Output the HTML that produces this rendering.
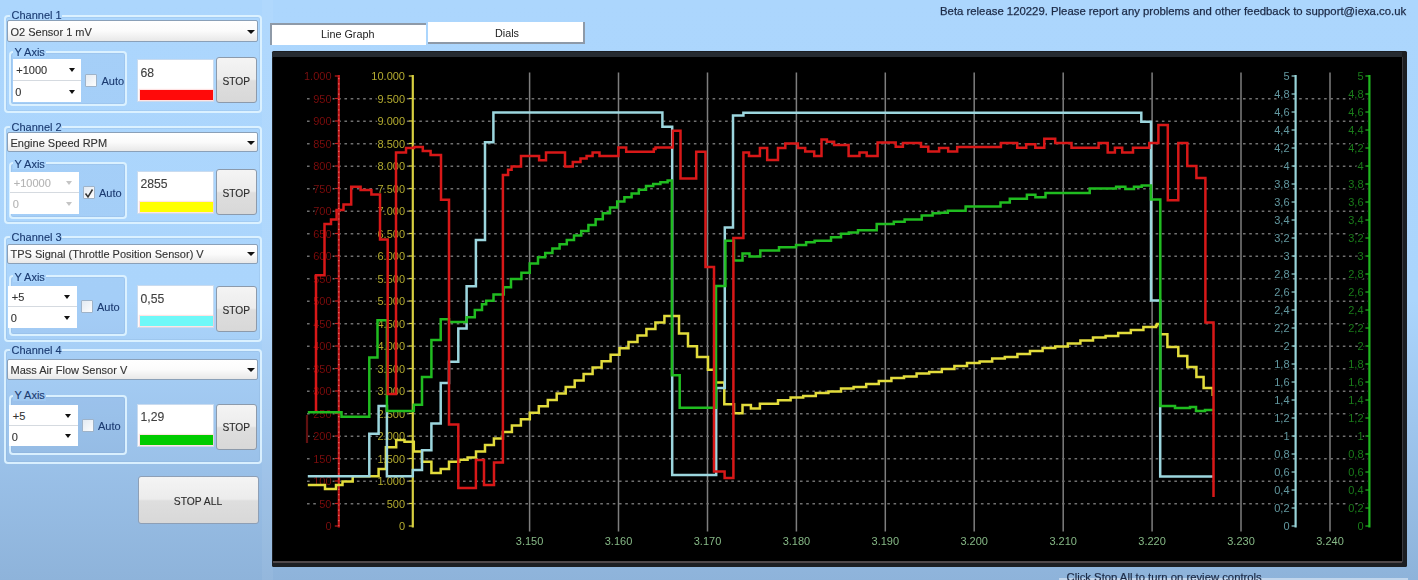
<!DOCTYPE html>
<html><head><meta charset="utf-8"><style>
*{margin:0;padding:0;box-sizing:border-box}
html,body{width:1418px;height:580px;overflow:hidden}
body{position:relative;font-family:"Liberation Sans",sans-serif;font-size:11px;
background:linear-gradient(180deg,#acd6fd 0px,#abd5fc 300px,#9fc6ee 420px,#8eb3da 580px);}
.a{position:absolute}
.t{position:absolute;white-space:pre;line-height:1}
.grp{position:absolute;border:2.4px solid rgba(222,243,255,0.92);border-radius:4px;box-shadow:inset 0 0 0 1px rgba(120,160,200,0.18)}
.grpi{position:absolute;border:1px solid rgba(140,180,215,0.45);border-radius:3px}
.lbg{position:absolute;background:linear-gradient(180deg,#acd6fd 0px,#abd5fc 300px,#9fc6ee 420px,#8eb3da 580px) fixed}
.lbl{position:absolute;white-space:pre;line-height:1;color:#1a3a70;font-size:11px;padding:0 1px}
.combo{position:absolute;border:1px solid #8aa0b8;border-radius:2px;background:linear-gradient(180deg,#ffffff 0%,#fbfbfb 50%,#e8e8e8 100%);color:#333;}
.combo span{position:absolute;left:2px;top:5px;white-space:pre;line-height:1}
.arr{position:absolute;width:0;height:0;border-left:4px solid transparent;border-right:4px solid transparent;border-top:4px solid #111}
.sc{position:absolute;background:#fff;color:#333}
.sc span{position:absolute;white-space:pre;line-height:1}
.chk{position:absolute;width:12px;height:13px;border:1px solid #9fb3c8;background:linear-gradient(135deg,#e3eaf2,#fdfdfd);border-radius:1px}
.val{position:absolute;background:#fff;border:1px solid #c9dbef}
.val span{position:absolute;left:3px;top:6.5px;font-size:12.2px;color:#404040;line-height:1}
.btn{position:absolute;border:1px solid #8c9aab;border-radius:3px;background:linear-gradient(180deg,#f4f4f4 0%,#ececec 48%,#dedede 52%,#d8d8d8 100%);color:#2c2c2c}
.lbl,.combo span,.sc span,.val span,.btn span{-webkit-text-stroke:0.12px currentColor}
.btn span{position:absolute;left:0;right:0;text-align:center;white-space:pre;line-height:1}
</style></head><body><div id="wrap" style="position:absolute;left:0;top:0;width:1418px;height:580px;filter:blur(0.65px)">
<div class="t" style="left:940px;top:6px;font-size:11.35px;color:#1c2a46;-webkit-text-stroke:0.25px currentColor">Beta release 120229. Please report any problems and other feedback to support@iexa.co.uk</div>
<div class="grp" style="left:4px;top:14.5px;width:258px;height:98.0px"></div>
<div class="lbg" style="left:10px;top:7.800000000000001px;width:52px;height:13px"></div>
<div class="lbl" style="left:10.5px;top:9.5px;">Channel 1</div>
<div class="combo" style="left:7px;top:20.4px;width:251px;height:21.3px"><span style="top:5.3500000000000005px;left:2.5px">O2 Sensor 1 mV</span><div class="arr" style="left:239px;top:8.15px"></div></div>
<div class="grp" style="left:8.5px;top:50.7px;width:118px;height:55.3px;background:rgba(0,40,100,0.035)"></div>
<div class="lbg" style="left:13px;top:45px;width:33px;height:12px"></div>
<div class="lbl" style="left:13.5px;top:46.5px;">Y Axis</div>
<div class="sc" style="left:12.8px;top:59px;width:68.5px;height:21.5px;border-bottom:1px solid #d5dae0"><span style="left:3.5px;top:6.25px;color:#333">+1000</span><div class="arr" style="left:56px;top:9.25px;border-top-color:#111;border-left-width:3.5px;border-right-width:3.5px"></div></div>
<div class="sc" style="left:12.8px;top:80.5px;width:68.5px;height:21.5px"><span style="left:2.5px;top:6.75px;color:#333">0</span><div class="arr" style="left:56px;top:9.25px;border-top-color:#111;border-left-width:3.5px;border-right-width:3.5px"></div></div>
<div class="chk" style="left:85.3px;top:74.0px"></div>
<div class="lbl" style="left:100.5px;top:75.5px">Auto</div>
<div class="val" style="left:136.5px;top:59px;width:77.5px;height:43px"><span>68</span><div class="a" style="left:2px;top:30px;width:73px;height:9.8px;background:#ff0a0a;box-shadow:0 0 1px 1px rgba(255,200,200,0.5)"></div></div>
<div class="btn" style="left:215.5px;top:57.4px;width:41.5px;height:46px"><span style="top:18.5px;font-size:10.2px">STOP</span></div>
<div class="grp" style="left:4px;top:126.1px;width:258px;height:98.4px"></div>
<div class="lbg" style="left:10px;top:120.3px;width:52px;height:13px"></div>
<div class="lbl" style="left:10.5px;top:122.0px;">Channel 2</div>
<div class="combo" style="left:7px;top:132.3px;width:251px;height:20px"><span style="top:4.7px;left:2.5px">Engine Speed RPM</span><div class="arr" style="left:239px;top:7.5px"></div></div>
<div class="grp" style="left:8.5px;top:162px;width:118px;height:56.80000000000001px;background:rgba(0,40,100,0.035)"></div>
<div class="lbg" style="left:13px;top:157px;width:33px;height:12px"></div>
<div class="lbl" style="left:13.5px;top:158.5px;">Y Axis</div>
<div class="sc" style="left:10.3px;top:171.5px;width:68.5px;height:21.0px;border-bottom:1px solid #d5dae0"><span style="left:3.5px;top:6.0px;color:#b4b4b4">+10000</span><div class="arr" style="left:56px;top:9.0px;border-top-color:#c4c4c4;border-left-width:3.5px;border-right-width:3.5px"></div></div>
<div class="sc" style="left:10.3px;top:192.5px;width:68.5px;height:21.0px"><span style="left:2.5px;top:6.5px;color:#b4b4b4">0</span><div class="arr" style="left:56px;top:9.0px;border-top-color:#c4c4c4;border-left-width:3.5px;border-right-width:3.5px"></div></div>
<div class="chk" style="left:82.8px;top:186.0px"></div>
<svg class="a" style="left:83.3px;top:186.5px" width="12" height="13"><path d="M2.5 6.5 L5 10 L9.5 2.5" stroke="#333" stroke-width="1.5" fill="none"/></svg>
<div class="lbl" style="left:98.0px;top:187.5px">Auto</div>
<div class="val" style="left:136.5px;top:170.8px;width:77.5px;height:43px"><span>2855</span><div class="a" style="left:2px;top:30px;width:73px;height:9.8px;background:#ffff00;box-shadow:0 0 1px 1px rgba(255,200,200,0.5)"></div></div>
<div class="btn" style="left:215.5px;top:169.3px;width:41.5px;height:46px"><span style="top:18.5px;font-size:10.2px">STOP</span></div>
<div class="grp" style="left:4px;top:235.5px;width:258px;height:106.5px"></div>
<div class="lbg" style="left:10px;top:230px;width:52px;height:13px"></div>
<div class="lbl" style="left:10.5px;top:231.7px;">Channel 3</div>
<div class="combo" style="left:7px;top:244px;width:251px;height:19.5px"><span style="top:4.45px;left:2.5px">TPS Signal (Throttle Position Sensor) V</span><div class="arr" style="left:239px;top:7.25px"></div></div>
<div class="grp" style="left:8.5px;top:275.1px;width:118px;height:60.89999999999998px;background:rgba(0,40,100,0.035)"></div>
<div class="lbg" style="left:13px;top:270px;width:33px;height:12px"></div>
<div class="lbl" style="left:13.5px;top:271.5px;">Y Axis</div>
<div class="sc" style="left:8.3px;top:285.8px;width:68.5px;height:21.0px;border-bottom:1px solid #d5dae0"><span style="left:3.5px;top:6.0px;color:#333">+5</span><div class="arr" style="left:56px;top:9.0px;border-top-color:#111;border-left-width:3.5px;border-right-width:3.5px"></div></div>
<div class="sc" style="left:8.3px;top:306.8px;width:68.5px;height:21.0px"><span style="left:2.5px;top:6.5px;color:#333">0</span><div class="arr" style="left:56px;top:9.0px;border-top-color:#111;border-left-width:3.5px;border-right-width:3.5px"></div></div>
<div class="chk" style="left:80.8px;top:300.3px"></div>
<div class="lbl" style="left:96.0px;top:301.8px">Auto</div>
<div class="val" style="left:136.5px;top:285px;width:77.5px;height:43px"><span>0,55</span><div class="a" style="left:2px;top:30px;width:73px;height:9.8px;background:#6ff8f8;box-shadow:0 0 1px 1px rgba(255,200,200,0.5)"></div></div>
<div class="btn" style="left:215.5px;top:286px;width:41.5px;height:46px"><span style="top:18.5px;font-size:10.2px">STOP</span></div>
<div class="grp" style="left:4px;top:348.5px;width:258px;height:115.0px"></div>
<div class="lbg" style="left:10px;top:343.3px;width:52px;height:13px"></div>
<div class="lbl" style="left:10.5px;top:345.0px;">Channel 4</div>
<div class="combo" style="left:7px;top:359px;width:251px;height:20.8px"><span style="top:5.1000000000000005px;left:2.5px">Mass Air Flow Sensor V</span><div class="arr" style="left:239px;top:7.9px"></div></div>
<div class="grp" style="left:8.5px;top:394.5px;width:118px;height:60.0px;background:rgba(0,40,100,0.035)"></div>
<div class="lbg" style="left:13px;top:388.5px;width:33px;height:12px"></div>
<div class="lbl" style="left:13.5px;top:390.0px;">Y Axis</div>
<div class="sc" style="left:9.3px;top:405px;width:68.5px;height:20.65px;border-bottom:1px solid #d5dae0"><span style="left:3.5px;top:5.824999999999999px;color:#333">+5</span><div class="arr" style="left:56px;top:8.825px;border-top-color:#111;border-left-width:3.5px;border-right-width:3.5px"></div></div>
<div class="sc" style="left:9.3px;top:425.65px;width:68.5px;height:20.65px"><span style="left:2.5px;top:6.324999999999999px;color:#333">0</span><div class="arr" style="left:56px;top:8.825px;border-top-color:#111;border-left-width:3.5px;border-right-width:3.5px"></div></div>
<div class="chk" style="left:81.8px;top:419.15px"></div>
<div class="lbl" style="left:97.0px;top:420.65px">Auto</div>
<div class="val" style="left:136.5px;top:403.8px;width:77.5px;height:43px"><span>1,29</span><div class="a" style="left:2px;top:30px;width:73px;height:9.8px;background:#00cc00;box-shadow:0 0 1px 1px rgba(255,200,200,0.5)"></div></div>
<div class="btn" style="left:215.5px;top:403.8px;width:41.5px;height:46px"><span style="top:18.5px;font-size:10.2px">STOP</span></div>
<div class="btn" style="left:137.5px;top:475.5px;width:121px;height:48.5px;border-color:#8e9fb5"><span style="top:20px;font-size:10.3px">STOP ALL</span></div>
<div class="a" style="left:262px;top:0;width:11px;height:580px;background:rgba(255,255,255,0.06)"></div>
<div class="a" style="left:270px;top:23px;width:156px;height:22px;background:#fff;border-top:2px solid #8e9aa8;border-left:2px solid #8e9aa8"></div>
<div class="t" style="left:321px;top:29px;font-size:10.8px;color:#222">Line Graph</div>
<div class="a" style="left:428px;top:22px;width:157px;height:22px;background:#fff;border-right:2px solid #8e9aa8;border-bottom:2px solid #8e9aa8"></div>
<div class="t" style="left:495px;top:28px;font-size:10.8px;color:#222">Dials</div>
<div class="a" style="left:272px;top:51px;width:1135px;height:515.5px;background:#1c1e22;border-radius:1.5px"></div>
<div class="a" style="left:272px;top:51.5px;width:1130px;height:6px;background:#262b31"></div>
<div class="a" style="left:273px;top:561px;width:1129px;height:1.6px;background:#50484a"></div>
<div class="a" style="left:1401.5px;top:57px;width:1.5px;height:505px;background:#3a3a40"></div>
<div class="a" style="left:273px;top:57px;width:1128.5px;height:504px;background:#000"></div>
<svg class="a" style="left:0;top:0;font-family:'Liberation Sans',sans-serif" width="1418" height="580" viewBox="0 0 1418 580"><line x1="529.6" y1="72.5" x2="529.6" y2="531.5" stroke="#7e7e7e" stroke-width="1.5"/><line x1="618.5" y1="72.5" x2="618.5" y2="531.5" stroke="#7e7e7e" stroke-width="1.5"/><line x1="707.5" y1="72.5" x2="707.5" y2="531.5" stroke="#7e7e7e" stroke-width="1.5"/><line x1="796.4" y1="72.5" x2="796.4" y2="531.5" stroke="#7e7e7e" stroke-width="1.5"/><line x1="885.3" y1="72.5" x2="885.3" y2="531.5" stroke="#7e7e7e" stroke-width="1.5"/><line x1="974.2" y1="72.5" x2="974.2" y2="531.5" stroke="#7e7e7e" stroke-width="1.5"/><line x1="1063.2" y1="72.5" x2="1063.2" y2="531.5" stroke="#7e7e7e" stroke-width="1.5"/><line x1="1152.1" y1="72.5" x2="1152.1" y2="531.5" stroke="#7e7e7e" stroke-width="1.5"/><line x1="1241.0" y1="72.5" x2="1241.0" y2="531.5" stroke="#7e7e7e" stroke-width="1.5"/><line x1="1330.0" y1="72.5" x2="1330.0" y2="531.5" stroke="#7e7e7e" stroke-width="1.5"/><line x1="307" y1="98.7" x2="1368" y2="98.7" stroke="#707070" stroke-width="1.5" stroke-dasharray="2.6 3.64"/><line x1="307" y1="121.2" x2="1368" y2="121.2" stroke="#707070" stroke-width="1.5" stroke-dasharray="2.6 3.64"/><line x1="307" y1="143.7" x2="1368" y2="143.7" stroke="#707070" stroke-width="1.5" stroke-dasharray="2.6 3.64"/><line x1="307" y1="166.2" x2="1368" y2="166.2" stroke="#707070" stroke-width="1.5" stroke-dasharray="2.6 3.64"/><line x1="307" y1="188.7" x2="1368" y2="188.7" stroke="#707070" stroke-width="1.5" stroke-dasharray="2.6 3.64"/><line x1="307" y1="211.2" x2="1368" y2="211.2" stroke="#707070" stroke-width="1.5" stroke-dasharray="2.6 3.64"/><line x1="307" y1="233.7" x2="1368" y2="233.7" stroke="#707070" stroke-width="1.5" stroke-dasharray="2.6 3.64"/><line x1="307" y1="256.2" x2="1368" y2="256.2" stroke="#707070" stroke-width="1.5" stroke-dasharray="2.6 3.64"/><line x1="307" y1="278.7" x2="1368" y2="278.7" stroke="#707070" stroke-width="1.5" stroke-dasharray="2.6 3.64"/><line x1="307" y1="301.2" x2="1368" y2="301.2" stroke="#707070" stroke-width="1.5" stroke-dasharray="2.6 3.64"/><line x1="307" y1="323.7" x2="1368" y2="323.7" stroke="#707070" stroke-width="1.5" stroke-dasharray="2.6 3.64"/><line x1="307" y1="346.2" x2="1368" y2="346.2" stroke="#707070" stroke-width="1.5" stroke-dasharray="2.6 3.64"/><line x1="307" y1="368.7" x2="1368" y2="368.7" stroke="#707070" stroke-width="1.5" stroke-dasharray="2.6 3.64"/><line x1="307" y1="391.2" x2="1368" y2="391.2" stroke="#707070" stroke-width="1.5" stroke-dasharray="2.6 3.64"/><line x1="307" y1="413.7" x2="1368" y2="413.7" stroke="#707070" stroke-width="1.5" stroke-dasharray="2.6 3.64"/><line x1="307" y1="436.2" x2="1368" y2="436.2" stroke="#707070" stroke-width="1.5" stroke-dasharray="2.6 3.64"/><line x1="307" y1="458.7" x2="1368" y2="458.7" stroke="#707070" stroke-width="1.5" stroke-dasharray="2.6 3.64"/><line x1="307" y1="481.2" x2="1368" y2="481.2" stroke="#707070" stroke-width="1.5" stroke-dasharray="2.6 3.64"/><line x1="307" y1="503.7" x2="1368" y2="503.7" stroke="#707070" stroke-width="1.5" stroke-dasharray="2.6 3.64"/><text x="529.6" y="544.5" text-anchor="middle" font-size="11" fill="#86b886">3.150</text><text x="618.5" y="544.5" text-anchor="middle" font-size="11" fill="#86b886">3.160</text><text x="707.5" y="544.5" text-anchor="middle" font-size="11" fill="#86b886">3.170</text><text x="796.4" y="544.5" text-anchor="middle" font-size="11" fill="#86b886">3.180</text><text x="885.3" y="544.5" text-anchor="middle" font-size="11" fill="#86b886">3.190</text><text x="974.2" y="544.5" text-anchor="middle" font-size="11" fill="#86b886">3.200</text><text x="1063.2" y="544.5" text-anchor="middle" font-size="11" fill="#86b886">3.210</text><text x="1152.1" y="544.5" text-anchor="middle" font-size="11" fill="#86b886">3.220</text><text x="1241.0" y="544.5" text-anchor="middle" font-size="11" fill="#86b886">3.230</text><text x="1330.0" y="544.5" text-anchor="middle" font-size="11" fill="#86b886">3.240</text><defs><filter id="bl" x="-20%" y="-50%" width="140%" height="200%"><feGaussianBlur stdDeviation="0.55"/></filter></defs><line x1="338.8" y1="75" x2="338.8" y2="527.5" stroke="#c41c1c" stroke-width="2.2"/><line x1="334.8" y1="76.0" x2="338.8" y2="76.0" stroke="#c41c1c" stroke-width="1.2"/><text x="331.5" y="80.0" text-anchor="end" font-size="11" fill="#7a0a0a" stroke="#000" stroke-width="3" paint-order="stroke" filter="url(#bl)">1.000</text><line x1="334.8" y1="98.5" x2="338.8" y2="98.5" stroke="#c41c1c" stroke-width="1.2"/><text x="331.5" y="102.5" text-anchor="end" font-size="11" fill="#7a0a0a" stroke="#000" stroke-width="3" paint-order="stroke" filter="url(#bl)">950</text><line x1="334.8" y1="121.0" x2="338.8" y2="121.0" stroke="#c41c1c" stroke-width="1.2"/><text x="331.5" y="125.0" text-anchor="end" font-size="11" fill="#7a0a0a" stroke="#000" stroke-width="3" paint-order="stroke" filter="url(#bl)">900</text><line x1="334.8" y1="143.5" x2="338.8" y2="143.5" stroke="#c41c1c" stroke-width="1.2"/><text x="331.5" y="147.5" text-anchor="end" font-size="11" fill="#7a0a0a" stroke="#000" stroke-width="3" paint-order="stroke" filter="url(#bl)">850</text><line x1="334.8" y1="166.0" x2="338.8" y2="166.0" stroke="#c41c1c" stroke-width="1.2"/><text x="331.5" y="170.0" text-anchor="end" font-size="11" fill="#7a0a0a" stroke="#000" stroke-width="3" paint-order="stroke" filter="url(#bl)">800</text><line x1="334.8" y1="188.5" x2="338.8" y2="188.5" stroke="#c41c1c" stroke-width="1.2"/><text x="331.5" y="192.5" text-anchor="end" font-size="11" fill="#7a0a0a" stroke="#000" stroke-width="3" paint-order="stroke" filter="url(#bl)">750</text><line x1="334.8" y1="211.0" x2="338.8" y2="211.0" stroke="#c41c1c" stroke-width="1.2"/><text x="331.5" y="215.0" text-anchor="end" font-size="11" fill="#7a0a0a" stroke="#000" stroke-width="3" paint-order="stroke" filter="url(#bl)">700</text><line x1="334.8" y1="233.5" x2="338.8" y2="233.5" stroke="#c41c1c" stroke-width="1.2"/><text x="331.5" y="237.5" text-anchor="end" font-size="11" fill="#7a0a0a" stroke="#000" stroke-width="3" paint-order="stroke" filter="url(#bl)">650</text><line x1="334.8" y1="256.0" x2="338.8" y2="256.0" stroke="#c41c1c" stroke-width="1.2"/><text x="331.5" y="260.0" text-anchor="end" font-size="11" fill="#7a0a0a" stroke="#000" stroke-width="3" paint-order="stroke" filter="url(#bl)">600</text><line x1="334.8" y1="278.5" x2="338.8" y2="278.5" stroke="#c41c1c" stroke-width="1.2"/><text x="331.5" y="282.5" text-anchor="end" font-size="11" fill="#7a0a0a" stroke="#000" stroke-width="3" paint-order="stroke" filter="url(#bl)">550</text><line x1="334.8" y1="301.0" x2="338.8" y2="301.0" stroke="#c41c1c" stroke-width="1.2"/><text x="331.5" y="305.0" text-anchor="end" font-size="11" fill="#7a0a0a" stroke="#000" stroke-width="3" paint-order="stroke" filter="url(#bl)">500</text><line x1="334.8" y1="323.5" x2="338.8" y2="323.5" stroke="#c41c1c" stroke-width="1.2"/><text x="331.5" y="327.5" text-anchor="end" font-size="11" fill="#7a0a0a" stroke="#000" stroke-width="3" paint-order="stroke" filter="url(#bl)">450</text><line x1="334.8" y1="346.0" x2="338.8" y2="346.0" stroke="#c41c1c" stroke-width="1.2"/><text x="331.5" y="350.0" text-anchor="end" font-size="11" fill="#7a0a0a" stroke="#000" stroke-width="3" paint-order="stroke" filter="url(#bl)">400</text><line x1="334.8" y1="368.5" x2="338.8" y2="368.5" stroke="#c41c1c" stroke-width="1.2"/><text x="331.5" y="372.5" text-anchor="end" font-size="11" fill="#7a0a0a" stroke="#000" stroke-width="3" paint-order="stroke" filter="url(#bl)">350</text><line x1="334.8" y1="391.0" x2="338.8" y2="391.0" stroke="#c41c1c" stroke-width="1.2"/><text x="331.5" y="395.0" text-anchor="end" font-size="11" fill="#7a0a0a" stroke="#000" stroke-width="3" paint-order="stroke" filter="url(#bl)">300</text><line x1="334.8" y1="413.5" x2="338.8" y2="413.5" stroke="#c41c1c" stroke-width="1.2"/><text x="331.5" y="417.5" text-anchor="end" font-size="11" fill="#7a0a0a" stroke="#000" stroke-width="3" paint-order="stroke" filter="url(#bl)">250</text><line x1="334.8" y1="436.0" x2="338.8" y2="436.0" stroke="#c41c1c" stroke-width="1.2"/><text x="331.5" y="440.0" text-anchor="end" font-size="11" fill="#7a0a0a" stroke="#000" stroke-width="3" paint-order="stroke" filter="url(#bl)">200</text><line x1="334.8" y1="458.5" x2="338.8" y2="458.5" stroke="#c41c1c" stroke-width="1.2"/><text x="331.5" y="462.5" text-anchor="end" font-size="11" fill="#7a0a0a" stroke="#000" stroke-width="3" paint-order="stroke" filter="url(#bl)">150</text><line x1="334.8" y1="481.0" x2="338.8" y2="481.0" stroke="#c41c1c" stroke-width="1.2"/><text x="331.5" y="485.0" text-anchor="end" font-size="11" fill="#7a0a0a" stroke="#000" stroke-width="3" paint-order="stroke" filter="url(#bl)">100</text><line x1="334.8" y1="503.5" x2="338.8" y2="503.5" stroke="#c41c1c" stroke-width="1.2"/><text x="331.5" y="507.5" text-anchor="end" font-size="11" fill="#7a0a0a" stroke="#000" stroke-width="3" paint-order="stroke" filter="url(#bl)">50</text><line x1="334.8" y1="526.0" x2="338.8" y2="526.0" stroke="#c41c1c" stroke-width="1.2"/><text x="331.5" y="530.0" text-anchor="end" font-size="11" fill="#7a0a0a" stroke="#000" stroke-width="3" paint-order="stroke" filter="url(#bl)">0</text><line x1="338.8" y1="78" x2="338.8" y2="526" stroke="#f07070" stroke-width="1.2" stroke-dasharray="1.2 4"/><line x1="412.8" y1="75" x2="412.8" y2="527.5" stroke="#d8d040" stroke-width="2.2"/><line x1="408.8" y1="76.0" x2="412.8" y2="76.0" stroke="#d8d040" stroke-width="1.2"/><text x="405" y="80.0" text-anchor="end" font-size="11" fill="#b4ac30" stroke="#000" stroke-width="3" paint-order="stroke" >10.000</text><line x1="408.8" y1="98.5" x2="412.8" y2="98.5" stroke="#d8d040" stroke-width="1.2"/><text x="405" y="102.5" text-anchor="end" font-size="11" fill="#b4ac30" stroke="#000" stroke-width="3" paint-order="stroke" >9.500</text><line x1="408.8" y1="121.0" x2="412.8" y2="121.0" stroke="#d8d040" stroke-width="1.2"/><text x="405" y="125.0" text-anchor="end" font-size="11" fill="#b4ac30" stroke="#000" stroke-width="3" paint-order="stroke" >9.000</text><line x1="408.8" y1="143.5" x2="412.8" y2="143.5" stroke="#d8d040" stroke-width="1.2"/><text x="405" y="147.5" text-anchor="end" font-size="11" fill="#b4ac30" stroke="#000" stroke-width="3" paint-order="stroke" >8.500</text><line x1="408.8" y1="166.0" x2="412.8" y2="166.0" stroke="#d8d040" stroke-width="1.2"/><text x="405" y="170.0" text-anchor="end" font-size="11" fill="#b4ac30" stroke="#000" stroke-width="3" paint-order="stroke" >8.000</text><line x1="408.8" y1="188.5" x2="412.8" y2="188.5" stroke="#d8d040" stroke-width="1.2"/><text x="405" y="192.5" text-anchor="end" font-size="11" fill="#b4ac30" stroke="#000" stroke-width="3" paint-order="stroke" >7.500</text><line x1="408.8" y1="211.0" x2="412.8" y2="211.0" stroke="#d8d040" stroke-width="1.2"/><text x="405" y="215.0" text-anchor="end" font-size="11" fill="#b4ac30" stroke="#000" stroke-width="3" paint-order="stroke" >7.000</text><line x1="408.8" y1="233.5" x2="412.8" y2="233.5" stroke="#d8d040" stroke-width="1.2"/><text x="405" y="237.5" text-anchor="end" font-size="11" fill="#b4ac30" stroke="#000" stroke-width="3" paint-order="stroke" >6.500</text><line x1="408.8" y1="256.0" x2="412.8" y2="256.0" stroke="#d8d040" stroke-width="1.2"/><text x="405" y="260.0" text-anchor="end" font-size="11" fill="#b4ac30" stroke="#000" stroke-width="3" paint-order="stroke" >6.000</text><line x1="408.8" y1="278.5" x2="412.8" y2="278.5" stroke="#d8d040" stroke-width="1.2"/><text x="405" y="282.5" text-anchor="end" font-size="11" fill="#b4ac30" stroke="#000" stroke-width="3" paint-order="stroke" >5.500</text><line x1="408.8" y1="301.0" x2="412.8" y2="301.0" stroke="#d8d040" stroke-width="1.2"/><text x="405" y="305.0" text-anchor="end" font-size="11" fill="#b4ac30" stroke="#000" stroke-width="3" paint-order="stroke" >5.000</text><line x1="408.8" y1="323.5" x2="412.8" y2="323.5" stroke="#d8d040" stroke-width="1.2"/><text x="405" y="327.5" text-anchor="end" font-size="11" fill="#b4ac30" stroke="#000" stroke-width="3" paint-order="stroke" >4.500</text><line x1="408.8" y1="346.0" x2="412.8" y2="346.0" stroke="#d8d040" stroke-width="1.2"/><text x="405" y="350.0" text-anchor="end" font-size="11" fill="#b4ac30" stroke="#000" stroke-width="3" paint-order="stroke" >4.000</text><line x1="408.8" y1="368.5" x2="412.8" y2="368.5" stroke="#d8d040" stroke-width="1.2"/><text x="405" y="372.5" text-anchor="end" font-size="11" fill="#b4ac30" stroke="#000" stroke-width="3" paint-order="stroke" >3.500</text><line x1="408.8" y1="391.0" x2="412.8" y2="391.0" stroke="#d8d040" stroke-width="1.2"/><text x="405" y="395.0" text-anchor="end" font-size="11" fill="#b4ac30" stroke="#000" stroke-width="3" paint-order="stroke" >3.000</text><line x1="408.8" y1="413.5" x2="412.8" y2="413.5" stroke="#d8d040" stroke-width="1.2"/><text x="405" y="417.5" text-anchor="end" font-size="11" fill="#b4ac30" stroke="#000" stroke-width="3" paint-order="stroke" >2.500</text><line x1="408.8" y1="436.0" x2="412.8" y2="436.0" stroke="#d8d040" stroke-width="1.2"/><text x="405" y="440.0" text-anchor="end" font-size="11" fill="#b4ac30" stroke="#000" stroke-width="3" paint-order="stroke" >2.000</text><line x1="408.8" y1="458.5" x2="412.8" y2="458.5" stroke="#d8d040" stroke-width="1.2"/><text x="405" y="462.5" text-anchor="end" font-size="11" fill="#b4ac30" stroke="#000" stroke-width="3" paint-order="stroke" >1.500</text><line x1="408.8" y1="481.0" x2="412.8" y2="481.0" stroke="#d8d040" stroke-width="1.2"/><text x="405" y="485.0" text-anchor="end" font-size="11" fill="#b4ac30" stroke="#000" stroke-width="3" paint-order="stroke" >1.000</text><line x1="408.8" y1="503.5" x2="412.8" y2="503.5" stroke="#d8d040" stroke-width="1.2"/><text x="405" y="507.5" text-anchor="end" font-size="11" fill="#b4ac30" stroke="#000" stroke-width="3" paint-order="stroke" >500</text><line x1="408.8" y1="526.0" x2="412.8" y2="526.0" stroke="#d8d040" stroke-width="1.2"/><text x="405" y="530.0" text-anchor="end" font-size="11" fill="#b4ac30" stroke="#000" stroke-width="3" paint-order="stroke" >0</text><line x1="1295.6" y1="75" x2="1295.6" y2="527.5" stroke="#98d4d8" stroke-width="2.2"/><line x1="1291.6" y1="76.0" x2="1295.6" y2="76.0" stroke="#98d4d8" stroke-width="1.2"/><text x="1289.5" y="80.0" text-anchor="end" font-size="11" fill="#6298a0" stroke="#000" stroke-width="3" paint-order="stroke" >5</text><line x1="1291.6" y1="94.0" x2="1295.6" y2="94.0" stroke="#98d4d8" stroke-width="1.2"/><text x="1289.5" y="98.0" text-anchor="end" font-size="11" fill="#6298a0" stroke="#000" stroke-width="3" paint-order="stroke" >4,8</text><line x1="1291.6" y1="112.0" x2="1295.6" y2="112.0" stroke="#98d4d8" stroke-width="1.2"/><text x="1289.5" y="116.0" text-anchor="end" font-size="11" fill="#6298a0" stroke="#000" stroke-width="3" paint-order="stroke" >4,6</text><line x1="1291.6" y1="130.0" x2="1295.6" y2="130.0" stroke="#98d4d8" stroke-width="1.2"/><text x="1289.5" y="134.0" text-anchor="end" font-size="11" fill="#6298a0" stroke="#000" stroke-width="3" paint-order="stroke" >4,4</text><line x1="1291.6" y1="148.0" x2="1295.6" y2="148.0" stroke="#98d4d8" stroke-width="1.2"/><text x="1289.5" y="152.0" text-anchor="end" font-size="11" fill="#6298a0" stroke="#000" stroke-width="3" paint-order="stroke" >4,2</text><line x1="1291.6" y1="166.0" x2="1295.6" y2="166.0" stroke="#98d4d8" stroke-width="1.2"/><text x="1289.5" y="170.0" text-anchor="end" font-size="11" fill="#6298a0" stroke="#000" stroke-width="3" paint-order="stroke" >4</text><line x1="1291.6" y1="184.0" x2="1295.6" y2="184.0" stroke="#98d4d8" stroke-width="1.2"/><text x="1289.5" y="188.0" text-anchor="end" font-size="11" fill="#6298a0" stroke="#000" stroke-width="3" paint-order="stroke" >3,8</text><line x1="1291.6" y1="202.0" x2="1295.6" y2="202.0" stroke="#98d4d8" stroke-width="1.2"/><text x="1289.5" y="206.0" text-anchor="end" font-size="11" fill="#6298a0" stroke="#000" stroke-width="3" paint-order="stroke" >3,6</text><line x1="1291.6" y1="220.0" x2="1295.6" y2="220.0" stroke="#98d4d8" stroke-width="1.2"/><text x="1289.5" y="224.0" text-anchor="end" font-size="11" fill="#6298a0" stroke="#000" stroke-width="3" paint-order="stroke" >3,4</text><line x1="1291.6" y1="238.0" x2="1295.6" y2="238.0" stroke="#98d4d8" stroke-width="1.2"/><text x="1289.5" y="242.0" text-anchor="end" font-size="11" fill="#6298a0" stroke="#000" stroke-width="3" paint-order="stroke" >3,2</text><line x1="1291.6" y1="256.0" x2="1295.6" y2="256.0" stroke="#98d4d8" stroke-width="1.2"/><text x="1289.5" y="260.0" text-anchor="end" font-size="11" fill="#6298a0" stroke="#000" stroke-width="3" paint-order="stroke" >3</text><line x1="1291.6" y1="274.0" x2="1295.6" y2="274.0" stroke="#98d4d8" stroke-width="1.2"/><text x="1289.5" y="278.0" text-anchor="end" font-size="11" fill="#6298a0" stroke="#000" stroke-width="3" paint-order="stroke" >2,8</text><line x1="1291.6" y1="292.0" x2="1295.6" y2="292.0" stroke="#98d4d8" stroke-width="1.2"/><text x="1289.5" y="296.0" text-anchor="end" font-size="11" fill="#6298a0" stroke="#000" stroke-width="3" paint-order="stroke" >2,6</text><line x1="1291.6" y1="310.0" x2="1295.6" y2="310.0" stroke="#98d4d8" stroke-width="1.2"/><text x="1289.5" y="314.0" text-anchor="end" font-size="11" fill="#6298a0" stroke="#000" stroke-width="3" paint-order="stroke" >2,4</text><line x1="1291.6" y1="328.0" x2="1295.6" y2="328.0" stroke="#98d4d8" stroke-width="1.2"/><text x="1289.5" y="332.0" text-anchor="end" font-size="11" fill="#6298a0" stroke="#000" stroke-width="3" paint-order="stroke" >2,2</text><line x1="1291.6" y1="346.0" x2="1295.6" y2="346.0" stroke="#98d4d8" stroke-width="1.2"/><text x="1289.5" y="350.0" text-anchor="end" font-size="11" fill="#6298a0" stroke="#000" stroke-width="3" paint-order="stroke" >2</text><line x1="1291.6" y1="364.0" x2="1295.6" y2="364.0" stroke="#98d4d8" stroke-width="1.2"/><text x="1289.5" y="368.0" text-anchor="end" font-size="11" fill="#6298a0" stroke="#000" stroke-width="3" paint-order="stroke" >1,8</text><line x1="1291.6" y1="382.0" x2="1295.6" y2="382.0" stroke="#98d4d8" stroke-width="1.2"/><text x="1289.5" y="386.0" text-anchor="end" font-size="11" fill="#6298a0" stroke="#000" stroke-width="3" paint-order="stroke" >1,6</text><line x1="1291.6" y1="400.0" x2="1295.6" y2="400.0" stroke="#98d4d8" stroke-width="1.2"/><text x="1289.5" y="404.0" text-anchor="end" font-size="11" fill="#6298a0" stroke="#000" stroke-width="3" paint-order="stroke" >1,4</text><line x1="1291.6" y1="418.0" x2="1295.6" y2="418.0" stroke="#98d4d8" stroke-width="1.2"/><text x="1289.5" y="422.0" text-anchor="end" font-size="11" fill="#6298a0" stroke="#000" stroke-width="3" paint-order="stroke" >1,2</text><line x1="1291.6" y1="436.0" x2="1295.6" y2="436.0" stroke="#98d4d8" stroke-width="1.2"/><text x="1289.5" y="440.0" text-anchor="end" font-size="11" fill="#6298a0" stroke="#000" stroke-width="3" paint-order="stroke" >1</text><line x1="1291.6" y1="454.0" x2="1295.6" y2="454.0" stroke="#98d4d8" stroke-width="1.2"/><text x="1289.5" y="458.0" text-anchor="end" font-size="11" fill="#6298a0" stroke="#000" stroke-width="3" paint-order="stroke" >0,8</text><line x1="1291.6" y1="472.0" x2="1295.6" y2="472.0" stroke="#98d4d8" stroke-width="1.2"/><text x="1289.5" y="476.0" text-anchor="end" font-size="11" fill="#6298a0" stroke="#000" stroke-width="3" paint-order="stroke" >0,6</text><line x1="1291.6" y1="490.0" x2="1295.6" y2="490.0" stroke="#98d4d8" stroke-width="1.2"/><text x="1289.5" y="494.0" text-anchor="end" font-size="11" fill="#6298a0" stroke="#000" stroke-width="3" paint-order="stroke" >0,4</text><line x1="1291.6" y1="508.0" x2="1295.6" y2="508.0" stroke="#98d4d8" stroke-width="1.2"/><text x="1289.5" y="512.0" text-anchor="end" font-size="11" fill="#6298a0" stroke="#000" stroke-width="3" paint-order="stroke" >0,2</text><line x1="1291.6" y1="526.0" x2="1295.6" y2="526.0" stroke="#98d4d8" stroke-width="1.2"/><text x="1289.5" y="530.0" text-anchor="end" font-size="11" fill="#6298a0" stroke="#000" stroke-width="3" paint-order="stroke" >0</text><line x1="1369.4" y1="75" x2="1369.4" y2="527.5" stroke="#20b820" stroke-width="2.2"/><line x1="1365.4" y1="76.0" x2="1369.4" y2="76.0" stroke="#20b820" stroke-width="1.2"/><text x="1363.5" y="80.0" text-anchor="end" font-size="11" fill="#1a7c1a" stroke="#000" stroke-width="3" paint-order="stroke" >5</text><line x1="1365.4" y1="94.0" x2="1369.4" y2="94.0" stroke="#20b820" stroke-width="1.2"/><text x="1363.5" y="98.0" text-anchor="end" font-size="11" fill="#1a7c1a" stroke="#000" stroke-width="3" paint-order="stroke" >4,8</text><line x1="1365.4" y1="112.0" x2="1369.4" y2="112.0" stroke="#20b820" stroke-width="1.2"/><text x="1363.5" y="116.0" text-anchor="end" font-size="11" fill="#1a7c1a" stroke="#000" stroke-width="3" paint-order="stroke" >4,6</text><line x1="1365.4" y1="130.0" x2="1369.4" y2="130.0" stroke="#20b820" stroke-width="1.2"/><text x="1363.5" y="134.0" text-anchor="end" font-size="11" fill="#1a7c1a" stroke="#000" stroke-width="3" paint-order="stroke" >4,4</text><line x1="1365.4" y1="148.0" x2="1369.4" y2="148.0" stroke="#20b820" stroke-width="1.2"/><text x="1363.5" y="152.0" text-anchor="end" font-size="11" fill="#1a7c1a" stroke="#000" stroke-width="3" paint-order="stroke" >4,2</text><line x1="1365.4" y1="166.0" x2="1369.4" y2="166.0" stroke="#20b820" stroke-width="1.2"/><text x="1363.5" y="170.0" text-anchor="end" font-size="11" fill="#1a7c1a" stroke="#000" stroke-width="3" paint-order="stroke" >4</text><line x1="1365.4" y1="184.0" x2="1369.4" y2="184.0" stroke="#20b820" stroke-width="1.2"/><text x="1363.5" y="188.0" text-anchor="end" font-size="11" fill="#1a7c1a" stroke="#000" stroke-width="3" paint-order="stroke" >3,8</text><line x1="1365.4" y1="202.0" x2="1369.4" y2="202.0" stroke="#20b820" stroke-width="1.2"/><text x="1363.5" y="206.0" text-anchor="end" font-size="11" fill="#1a7c1a" stroke="#000" stroke-width="3" paint-order="stroke" >3,6</text><line x1="1365.4" y1="220.0" x2="1369.4" y2="220.0" stroke="#20b820" stroke-width="1.2"/><text x="1363.5" y="224.0" text-anchor="end" font-size="11" fill="#1a7c1a" stroke="#000" stroke-width="3" paint-order="stroke" >3,4</text><line x1="1365.4" y1="238.0" x2="1369.4" y2="238.0" stroke="#20b820" stroke-width="1.2"/><text x="1363.5" y="242.0" text-anchor="end" font-size="11" fill="#1a7c1a" stroke="#000" stroke-width="3" paint-order="stroke" >3,2</text><line x1="1365.4" y1="256.0" x2="1369.4" y2="256.0" stroke="#20b820" stroke-width="1.2"/><text x="1363.5" y="260.0" text-anchor="end" font-size="11" fill="#1a7c1a" stroke="#000" stroke-width="3" paint-order="stroke" >3</text><line x1="1365.4" y1="274.0" x2="1369.4" y2="274.0" stroke="#20b820" stroke-width="1.2"/><text x="1363.5" y="278.0" text-anchor="end" font-size="11" fill="#1a7c1a" stroke="#000" stroke-width="3" paint-order="stroke" >2,8</text><line x1="1365.4" y1="292.0" x2="1369.4" y2="292.0" stroke="#20b820" stroke-width="1.2"/><text x="1363.5" y="296.0" text-anchor="end" font-size="11" fill="#1a7c1a" stroke="#000" stroke-width="3" paint-order="stroke" >2,6</text><line x1="1365.4" y1="310.0" x2="1369.4" y2="310.0" stroke="#20b820" stroke-width="1.2"/><text x="1363.5" y="314.0" text-anchor="end" font-size="11" fill="#1a7c1a" stroke="#000" stroke-width="3" paint-order="stroke" >2,4</text><line x1="1365.4" y1="328.0" x2="1369.4" y2="328.0" stroke="#20b820" stroke-width="1.2"/><text x="1363.5" y="332.0" text-anchor="end" font-size="11" fill="#1a7c1a" stroke="#000" stroke-width="3" paint-order="stroke" >2,2</text><line x1="1365.4" y1="346.0" x2="1369.4" y2="346.0" stroke="#20b820" stroke-width="1.2"/><text x="1363.5" y="350.0" text-anchor="end" font-size="11" fill="#1a7c1a" stroke="#000" stroke-width="3" paint-order="stroke" >2</text><line x1="1365.4" y1="364.0" x2="1369.4" y2="364.0" stroke="#20b820" stroke-width="1.2"/><text x="1363.5" y="368.0" text-anchor="end" font-size="11" fill="#1a7c1a" stroke="#000" stroke-width="3" paint-order="stroke" >1,8</text><line x1="1365.4" y1="382.0" x2="1369.4" y2="382.0" stroke="#20b820" stroke-width="1.2"/><text x="1363.5" y="386.0" text-anchor="end" font-size="11" fill="#1a7c1a" stroke="#000" stroke-width="3" paint-order="stroke" >1,6</text><line x1="1365.4" y1="400.0" x2="1369.4" y2="400.0" stroke="#20b820" stroke-width="1.2"/><text x="1363.5" y="404.0" text-anchor="end" font-size="11" fill="#1a7c1a" stroke="#000" stroke-width="3" paint-order="stroke" >1,4</text><line x1="1365.4" y1="418.0" x2="1369.4" y2="418.0" stroke="#20b820" stroke-width="1.2"/><text x="1363.5" y="422.0" text-anchor="end" font-size="11" fill="#1a7c1a" stroke="#000" stroke-width="3" paint-order="stroke" >1,2</text><line x1="1365.4" y1="436.0" x2="1369.4" y2="436.0" stroke="#20b820" stroke-width="1.2"/><text x="1363.5" y="440.0" text-anchor="end" font-size="11" fill="#1a7c1a" stroke="#000" stroke-width="3" paint-order="stroke" >1</text><line x1="1365.4" y1="454.0" x2="1369.4" y2="454.0" stroke="#20b820" stroke-width="1.2"/><text x="1363.5" y="458.0" text-anchor="end" font-size="11" fill="#1a7c1a" stroke="#000" stroke-width="3" paint-order="stroke" >0,8</text><line x1="1365.4" y1="472.0" x2="1369.4" y2="472.0" stroke="#20b820" stroke-width="1.2"/><text x="1363.5" y="476.0" text-anchor="end" font-size="11" fill="#1a7c1a" stroke="#000" stroke-width="3" paint-order="stroke" >0,6</text><line x1="1365.4" y1="490.0" x2="1369.4" y2="490.0" stroke="#20b820" stroke-width="1.2"/><text x="1363.5" y="494.0" text-anchor="end" font-size="11" fill="#1a7c1a" stroke="#000" stroke-width="3" paint-order="stroke" >0,4</text><line x1="1365.4" y1="508.0" x2="1369.4" y2="508.0" stroke="#20b820" stroke-width="1.2"/><text x="1363.5" y="512.0" text-anchor="end" font-size="11" fill="#1a7c1a" stroke="#000" stroke-width="3" paint-order="stroke" >0,2</text><line x1="1365.4" y1="526.0" x2="1369.4" y2="526.0" stroke="#20b820" stroke-width="1.2"/><text x="1363.5" y="530.0" text-anchor="end" font-size="11" fill="#1a7c1a" stroke="#000" stroke-width="3" paint-order="stroke" >0</text><line x1="307" y1="415" x2="307" y2="443" stroke="#601010" stroke-width="2.2"/><polyline points="307.8,485.0 325.0,485.0 325.0,489.0 336.0,489.0 336.0,485.0 342.5,485.0 342.5,481.5 352.7,481.5 352.7,476.2 378.6,476.2 378.6,469.0 385.9,469.0 385.9,447.2 396.2,447.2 396.2,440.0 404.5,440.0 404.5,441.7 413.8,441.7 413.8,451.4 422.0,451.4 422.0,461.7 431.4,461.7 431.4,473.1 440.7,473.1 440.7,469.0 449.0,469.0 449.0,461.7 459.3,461.7 459.3,459.7 467.6,459.7 467.6,457.6 476.0,457.6 476.0,451.4 485.0,451.4 485.0,445.0 493.9,445.0 493.9,438.5 502.9,438.5 502.9,432.1 511.9,432.1 511.9,425.6 520.9,425.6 520.9,419.2 529.8,419.2 529.8,412.7 538.8,412.7 538.8,406.3 547.8,406.3 547.8,399.9 556.7,399.9 556.7,393.4 565.7,393.4 565.7,387.0 574.7,387.0 574.7,380.5 583.6,380.5 583.6,374.1 592.6,374.1 592.6,367.6 601.6,367.6 601.6,361.2 610.6,361.2 610.6,354.8 619.5,354.8 619.5,348.3 628.5,348.3 628.5,341.9 637.5,341.9 637.5,335.4 646.4,335.4 646.4,329.0 655.4,329.0 655.4,322.5 664.4,322.5 664.4,316.1 664.5,316.1 664.5,316.0 679.0,316.0 679.0,333.5 688.0,333.5 688.0,346.2 697.0,346.2 697.0,357.0 708.0,357.0 708.0,369.8 715.3,369.8 715.3,382.5 724.3,382.5 724.3,404.2 734.0,404.2 734.0,413.3 742.5,413.3 742.5,404.9 750.9,404.9 750.9,408.5 759.9,408.5 759.9,403.8 778.0,403.8 778.0,400.2 790.6,400.2 790.6,397.5 803.2,397.5 803.2,396.0 815.8,396.0 815.8,393.0 828.4,393.0 828.4,391.5 841.0,391.5 841.0,388.5 853.6,388.5 853.6,387.0 866.2,387.0 866.2,384.0 878.8,384.0 878.8,381.0 891.4,381.0 891.4,378.0 904.0,378.0 904.0,376.5 916.6,376.5 916.6,373.5 929.2,373.5 929.2,372.0 941.8,372.0 941.8,369.0 954.4,369.0 954.4,366.0 967.0,366.0 967.0,363.0 979.6,363.0 979.6,361.5 992.2,361.5 992.2,358.5 1004.8,358.5 1004.8,357.0 1017.4,357.0 1017.4,354.0 1030.0,354.0 1030.0,351.0 1042.6,351.0 1042.6,348.0 1055.2,348.0 1055.2,346.5 1067.8,346.5 1067.8,343.5 1080.4,343.5 1080.4,340.5 1093.0,340.5 1093.0,337.5 1105.6,337.5 1105.6,336.0 1118.2,336.0 1118.2,333.0 1130.8,333.0 1130.8,330.0 1143.4,330.0 1143.4,327.0 1156.0,327.0 1156.0,325.5 1157.0,325.5 1157.0,324.0 1160.2,324.0 1160.2,334.3 1167.4,334.3 1167.4,347.0 1178.3,347.0 1178.3,356.0 1187.3,356.0 1187.3,367.0 1196.4,367.0 1196.4,377.0 1203.6,377.0 1203.6,387.9 1212.7,387.9 1212.7,395.9" fill="none" stroke="#e2dc3c" stroke-width="2.5" stroke-linejoin="miter"/><polyline points="307.8,476.2 369.3,476.2 369.3,433.8 378.6,433.8 378.6,405.9 386.9,405.9 386.9,476.2 412.8,476.2 412.8,470.0 422.0,470.0 422.0,450.3 431.4,450.3 431.4,423.4 440.7,423.4 440.7,383.1 449.0,383.1 449.0,361.7 458.3,361.7 458.3,328.6 466.6,328.6 466.6,286.2 475.9,286.2 475.9,240.0 485.0,240.0 485.0,142.2 493.4,142.2 493.4,112.6 662.4,112.6 662.4,126.8 672.2,126.8 672.2,474.9 716.2,474.9 716.2,388.0 724.8,388.0 724.8,227.6 733.0,227.6 733.0,115.5 743.4,115.5 743.4,112.8 1141.3,112.8 1141.3,121.8 1151.0,121.8 1151.0,300.5 1160.2,300.5 1160.2,476.5 1213.4,476.5" fill="none" stroke="#9cd6de" stroke-width="2.5" stroke-linejoin="miter"/><polyline points="307.8,412.3 341.5,412.3 341.5,416.8 369.3,416.8 369.3,357.5 377.5,357.5 377.5,320.3 386.9,320.3 386.9,411.0 413.8,411.0 413.8,404.8 422.0,404.8 422.0,377.0 431.4,377.0 431.4,340.0 440.7,340.0 440.7,319.3 449.0,319.3 449.0,322.0 466.6,322.0 466.6,317.2 474.8,317.2 474.8,310.0 482.0,310.0 482.0,304.2 486.2,304.2 486.2,300.7 493.5,300.7 493.5,294.5 503.8,294.5 503.8,287.2 511.0,287.2 511.0,279.0 521.4,279.0 521.4,272.8 529.7,272.8 529.7,263.4 538.0,263.4 538.0,257.2 545.2,257.2 545.2,252.9 552.4,252.9 552.4,248.6 559.6,248.6 559.6,244.2 566.8,244.2 566.8,239.9 574.0,239.9 574.0,235.6 581.2,235.6 581.2,231.0 588.4,231.0 588.4,225.1 595.6,225.1 595.6,219.2 602.8,219.2 602.8,213.3 610.0,213.3 610.0,207.4 617.2,207.4 617.2,201.5 624.4,201.5 624.4,197.2 631.6,197.2 631.6,193.5 638.8,193.5 638.8,189.7 646.0,189.7 646.0,186.0 653.2,186.0 653.2,184.1 660.4,184.1 660.4,182.3 667.6,182.3 667.6,180.4 671.9,180.4 671.9,179.3 671.9,375.2 679.7,375.2 679.7,407.8 716.0,407.8 716.0,286.0 725.4,286.0 725.4,240.7 734.0,240.7 734.0,260.5 742.5,260.5 742.5,253.5 749.5,253.5 749.5,256.6 760.3,256.6 760.3,250.4 779.0,250.4 779.0,247.3 796.0,247.3 796.0,245.0 806.1,245.0 806.1,242.2 814.6,242.2 814.6,240.7 831.0,240.7 831.0,237.2 841.0,237.2 841.0,233.8 848.8,233.8 848.8,232.6 858.0,232.6 858.0,230.3 876.7,230.3 876.7,224.0 893.8,224.0 893.8,221.7 904.6,221.7 904.6,219.4 921.7,219.4 921.7,215.5 932.6,215.5 932.6,213.2 940.0,213.2 940.0,212.7 947.8,212.7 947.8,210.7 965.6,210.7 965.6,206.5 1000.5,206.5 1000.5,202.6 1009.8,202.6 1009.8,198.7 1026.9,198.7 1026.9,194.8 1035.4,194.8 1035.4,197.2 1045.5,197.2 1045.5,193.0 1089.7,193.0 1089.7,188.6 1116.1,188.6 1116.1,186.8 1125.4,186.8 1125.4,188.9 1134.0,188.9 1134.0,186.8 1141.7,186.8 1141.7,185.5 1151.0,185.5 1151.0,199.5 1160.3,199.5 1160.3,406.0 1175.0,406.0 1175.0,408.0 1190.0,408.0 1190.0,407.0 1196.0,407.0 1196.0,411.0 1205.0,411.0 1205.0,410.0 1213.0,410.0 1213.0,409.0" fill="none" stroke="#20bc20" stroke-width="2.5" stroke-linejoin="miter"/><polyline points="316.0,411.0 316.0,275.3 324.5,275.3 324.5,224.0 331.0,224.0 331.0,219.4 336.6,219.4 336.6,210.0 343.5,210.0 343.5,204.5 351.2,204.5 351.2,186.8 360.6,186.8 360.6,190.0 371.4,190.0 371.4,194.5 380.0,194.5 380.0,239.6 387.7,239.6 387.7,394.0 396.0,394.0 396.0,152.6 406.0,152.6 406.0,148.0 414.0,148.0 414.0,147.0 422.8,147.0 422.8,151.0 430.6,151.0 430.6,155.0 441.0,155.0 441.0,199.8 449.0,199.8 449.0,424.5 458.3,424.5 458.3,488.0 475.9,488.0 475.9,460.0 484.0,460.0 484.0,485.0 494.0,485.0 494.0,462.6 502.9,462.6 502.9,175.0 508.1,175.0 508.1,169.8 511.6,169.8 511.6,166.4 521.0,166.4 521.0,156.0 539.1,156.0 539.1,160.3 546.0,160.3 546.0,152.6 565.0,152.6 565.0,166.4 572.8,166.4 572.8,162.0 580.5,162.0 580.5,158.6 586.6,158.6 586.6,156.0 592.6,156.0 592.6,152.6 599.5,152.6 599.5,156.0 618.4,156.0 618.4,147.4 626.2,147.4 626.2,151.7 653.8,151.7 653.8,149.1 655.5,149.1 655.5,147.4 672.8,147.4 672.8,130.7 680.5,130.7 680.5,178.5 696.2,178.5 696.2,151.7 705.5,151.7 705.5,267.0 714.0,267.0 714.0,471.5 724.6,471.5 724.6,478.0 733.4,478.0 733.4,237.9 743.4,237.9 743.4,152.4 749.0,152.4 749.0,156.0 759.9,156.0 759.9,148.0 767.2,148.0 767.2,160.0 778.0,160.0 778.0,148.0 785.3,148.0 785.3,143.5 797.9,143.5 797.9,148.0 805.2,148.0 805.2,151.5 814.2,151.5 814.2,156.0 821.5,156.0 821.5,139.5 826.9,139.5 826.9,141.7 834.1,141.7 834.1,145.0 848.6,145.0 848.6,156.0 859.5,156.0 859.5,152.5 866.7,152.5 866.7,156.0 877.6,156.0 877.6,142.4 895.7,142.4 895.7,146.8 902.9,146.8 902.9,143.0 921.0,143.0 921.0,146.8 928.3,146.8 928.3,151.5 939.1,151.5 939.1,148.0 948.2,148.0 948.2,151.5 957.2,151.5 957.2,147.0 1000.9,147.0 1000.9,143.0 1017.2,143.0 1017.2,147.8 1026.2,147.8 1026.2,144.2 1035.3,144.2 1035.3,147.8 1044.3,147.8 1044.3,138.8 1055.2,138.8 1055.2,143.0 1071.5,143.0 1071.5,147.8 1098.6,147.8 1098.6,143.0 1107.7,143.0 1107.7,152.5 1114.9,152.5 1114.9,147.8 1122.2,147.8 1122.2,152.5 1133.0,152.5 1133.0,147.8 1149.3,147.8 1149.3,143.0 1158.4,143.0 1158.4,125.0 1167.8,125.0 1167.8,200.3 1178.3,200.3 1178.3,143.0 1187.3,143.0 1187.3,166.0 1196.4,166.0 1196.4,177.9 1205.4,177.9 1205.4,322.6 1213.5,322.6 1213.5,497.0" fill="none" stroke="#d81818" stroke-width="2.5" stroke-linejoin="miter"/></svg>
<div class="a" style="left:1059px;top:577.5px;width:349px;height:3px;background:#c2d6ec"></div>
<div class="t" style="left:1066.5px;top:571.5px;font-size:11.3px;color:#1c2a46;-webkit-text-stroke:0.2px currentColor">Click Stop All to turn on review controls</div>
</div></body></html>
